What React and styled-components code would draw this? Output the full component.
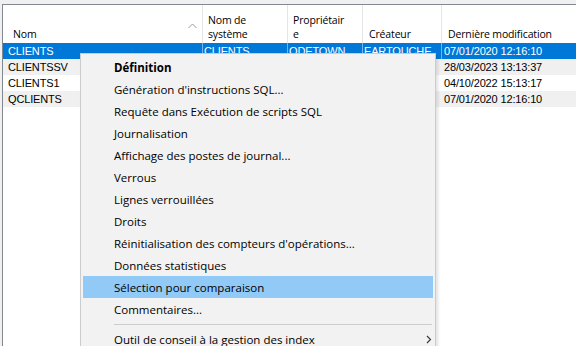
import styled, { createGlobalStyle } from "styled-components";

const GlobalStyle = createGlobalStyle`
  html, body {
    margin: 0;
    padding: 0;
    background: #f0f0f0;
    overflow: hidden;
  }
  * {
    box-sizing: border-box;
  }
`;

const Window = styled.div`
  position: relative;
  width: 576px;
  height: 346px;
  padding: 4px 0 0 2px;
  overflow: hidden;
`;

const ListView = styled.div`
  width: 620px;
  height: 420px;
  background: #ffffff;
  border: 1px solid #828790;
`;

const COLUMNS = "200px 85px 75px 79px 1fr";

const HeaderRow = styled.div`
  display: grid;
  grid-template-columns: ${COLUMNS};
  height: 38px;
  font-family: "Open Sans", "Noto Sans", sans-serif;
  font-size: 10.5px;
  letter-spacing: -0.15px;
  color: #000;
`;

const HeaderCell = styled.div`
  position: relative;
  display: flex;
  flex-direction: column;
  justify-content: flex-end;
  padding: 0 0 2px ${(p) => p.$indent || 5}px;
  line-height: 14px;
  border-right: 1px solid #e5e5e5;
  white-space: nowrap;
  overflow: hidden;
`;

const SortArrow = styled.svg`
  position: absolute;
  top: 18px;
  right: 5px;
`;

const DataRow = styled.div`
  display: grid;
  grid-template-columns: ${COLUMNS};
  height: 16px;
  line-height: 16px;
  font-family: "Liberation Sans", Arial, sans-serif;
  font-size: 11px;
  letter-spacing: -0.15px;
  background: ${(p) => (p.$selected ? "#0078d7" : p.$alt ? "#f0f0f0" : "#ffffff")};
  color: ${(p) => (p.$selected ? "#ffffff" : "#000000")};
`;

const DataCell = styled.div`
  padding-left: ${(p) => p.$indent || 1}px;
  white-space: nowrap;
  overflow: hidden;
  border-right: 1px solid ${(p) => (p.$selected ? "rgba(255,255,255,0.45)" : "transparent")};
`;

const Menu = styled.div`
  position: absolute;
  left: 80px;
  top: 53px;
  width: 356px;
  padding: 2px;
  background: #f2f2f2;
  border: 1px solid #cccccc;
  box-shadow: 2px 2px 3px rgba(0, 0, 0, 0.12);
  font-family: "Open Sans", "Noto Sans", sans-serif;
  font-size: 11.5px;
  color: #000;
`;

const MenuItem = styled.div`
  display: flex;
  align-items: center;
  justify-content: space-between;
  height: 22px;
  padding: 0 1px 0 31px;
  background: ${(p) => (p.$active ? "#91c9f7" : "transparent")};
  font-weight: ${(p) => (p.$bold ? 700 : 400)};
  white-space: nowrap;
`;

const Separator = styled.div`
  height: 1px;
  margin: 4px 1px 3px 31px;
  background: #cccccc;
`;

const Chevron = () => (
  <svg width="6" height="9" viewBox="0 0 6 9">
    <polyline points="1,1 4.5,4.5 1,8" fill="none" stroke="#333" strokeWidth="1.1" />
  </svg>
);

const headers = [
  { lines: ["Nom"], indent: 10, sorted: true },
  { lines: ["Nom de", "système"] },
  { lines: ["Propriétair", "e"] },
  { lines: ["Créateur"], indent: 6 },
  { lines: ["Dernière modification"], indent: 6 },
];

const rows = [
  ["CLIENTS", "CLIENTS", "ODETOWN", "EARTOUCHE", "07/01/2020 12:16:10"],
  ["CLIENTSSV", "", "", "", "28/03/2023 13:13:37"],
  ["CLIENTS1", "", "", "", "04/10/2022 15:13:17"],
  ["QCLIENTS", "", "", "", "07/01/2020 12:16:10"],
];

const menuItems = [
  { label: "Définition", bold: true },
  { label: "Génération d'instructions SQL..." },
  { label: "Requête dans Exécution de scripts SQL" },
  { label: "Journalisation" },
  { label: "Affichage des postes de journal..." },
  { label: "Verrous" },
  { label: "Lignes verrouillées" },
  { label: "Droits" },
  { label: "Réinitialisation des compteurs d'opérations..." },
  { label: "Données statistiques" },
  { label: "Sélection pour comparaison", active: true },
  { label: "Commentaires..." },
  { separator: true },
  { label: "Outil de conseil à la gestion des index", submenu: true },
];

export default function App() {
  return (
    <>
      <GlobalStyle />
      <Window>
        <ListView>
          <HeaderRow>
            {headers.map((h, i) => (
              <HeaderCell key={i} $indent={h.indent}>
                {h.lines.map((l) => (
                  <span key={l}>{l}</span>
                ))}
                {h.sorted && (
                  <SortArrow width="9" height="6" viewBox="0 0 9 6">
                    <polyline points="0.5,5 4.5,1 8.5,5" fill="none" stroke="#9a9a9a" strokeWidth="1" />
                  </SortArrow>
                )}
              </HeaderCell>
            ))}
          </HeaderRow>
          {rows.map((r, i) => (
            <DataRow key={i} $selected={i === 0} $alt={i % 2 === 1}>
              {r.map((c, j) => (
                <DataCell key={j} $selected={i === 0} $indent={j === 0 ? 5 : j === 4 ? 2 : 1}>
                  {c}
                </DataCell>
              ))}
            </DataRow>
          ))}
        </ListView>
        <Menu>
          {menuItems.map((m, i) =>
            m.separator ? (
              <Separator key={i} />
            ) : (
              <MenuItem key={i} $bold={m.bold} $active={m.active}>
                <span>{m.label}</span>
                {m.submenu && <Chevron />}
              </MenuItem>
            )
          )}
        </Menu>
      </Window>
    </>
  );
}
